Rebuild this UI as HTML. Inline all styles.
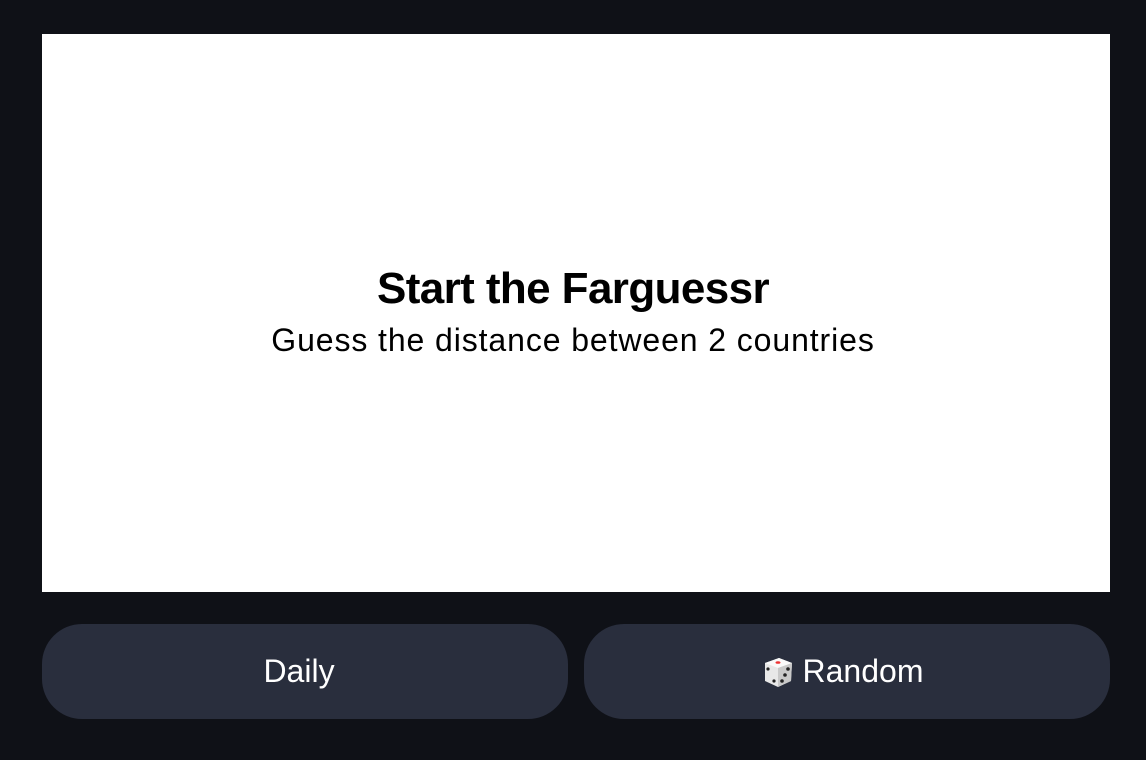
<!DOCTYPE html>
<html><head><meta charset="utf-8"><style>
html,body{margin:0;padding:0;background:#0f1117;width:1146px;height:760px;overflow:hidden;font-family:"Liberation Sans",sans-serif}
.card{position:absolute;left:42px;top:34px;width:1068px;height:558px;background:#fff}
h1{position:absolute;left:0;width:100%;top:264px;margin:0;text-align:center;font-size:44px;font-weight:bold;letter-spacing:-0.6px;color:#000}
.sub{position:absolute;left:0;width:100%;top:322px;text-align:center;font-size:32px;color:#000;letter-spacing:0.9px}
.btn{position:absolute;top:624px;height:95px;width:526px;background:#292e3d;border-radius:40px;color:#fff;font-size:32px;display:flex;align-items:center;justify-content:center;box-sizing:border-box}
</style></head><body>
<div class="card"></div>
<h1>Start the Farguessr</h1>
<div class="sub">Guess the distance between 2 countries</div>
<div class="btn" style="left:42px;padding-right:12px">Daily</div>
<div class="btn" style="left:584px;padding-right:10px"><svg width="34" height="34" viewBox="0 0 34 34" style="margin-right:8px"><polygon points="4,8 18,3 31,8 30,26 17,32 4,26" fill="#e8e8e8"/><polygon points="4,8 18,3 31,8 17,13" fill="#fafafa"/><polygon points="17,13 31,8 30,26 17,32" fill="#c9c9c9"/><ellipse cx="17" cy="7.5" rx="2.5" ry="1.3" fill="#e33"/><circle cx="7" cy="14" r="1.6" fill="#222"/><circle cx="13" cy="26" r="1.6" fill="#222"/><circle cx="27" cy="14" r="1.8" fill="#222"/><circle cx="24" cy="20" r="1.8" fill="#222"/><circle cx="21" cy="26" r="1.8" fill="#222"/></svg>Random</div>
</body></html>
